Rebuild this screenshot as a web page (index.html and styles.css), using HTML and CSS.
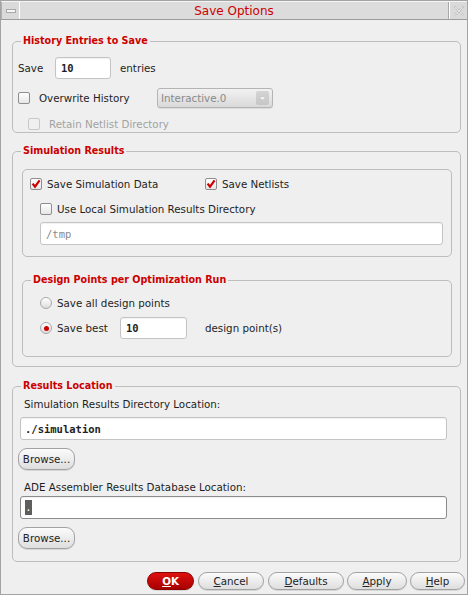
FILE: index.html
```html
<!DOCTYPE html>
<html>
<head>
<meta charset="utf-8">
<title>Save Options</title>
<link rel="stylesheet" href="styles.css">
</head>
<body>
<div class="window">
  <div class="titlebar">
    <div class="tb-btn tb-min"><span class="min-bar"></span></div>
    <div class="tb-title">Save Options</div>
    <div class="tb-btn tb-close">
      <svg width="12" height="12" viewBox="0 0 12 12"><path d="M1.5 1.5 L10.5 10.5 M10.5 1.5 L1.5 10.5" stroke="#b4b4b4" stroke-width="2" stroke-dasharray="1.4 1" fill="none"/><path d="M1.5 1.5 L10.5 10.5 M10.5 1.5 L1.5 10.5" stroke="#ffffff" stroke-width="0.6" fill="none"/></svg>
    </div>
  </div>

  <div class="content">
    <fieldset class="group g-history">
      <legend>History Entries to Save</legend>
      <div class="gbody">
        <div class="row r-save">
          <span class="w-save">Save</span>
          <span class="field f-entries">10</span>
          <span class="after-entries">entries</span>
        </div>
        <div class="row r-over">
          <span class="cb"></span>
          <span class="w-over">Overwrite History</span>
          <span class="combo"><span class="combo-text">Interactive.0</span><span class="combo-arrow"><svg width="7" height="5" viewBox="0 0 7 5"><path d="M0.5 1 L6.5 1 L3.5 4 Z" fill="#ffffff" stroke="#c8c8c8" stroke-width="0.6"/></svg></span></span>
        </div>
        <div class="row r-retain">
          <span class="cb cb-disabled"></span>
          <span class="disabled-text">Retain Netlist Directory</span>
        </div>
      </div>
    </fieldset>

    <fieldset class="group g-sim">
      <legend>Simulation Results</legend>
      <div class="gbody gbody-sim">
        <div class="box box-sim">
          <div class="row r-simdata">
            <span class="cb cb-checked"><svg width="10" height="10" viewBox="0 0 10 10"><path d="M1.6 4.6 L4 7.6 L8.6 1.4" stroke="#cc0000" stroke-width="2.2" fill="none" stroke-linejoin="miter"/></svg></span>
            <span class="w-simdata">Save Simulation Data</span>
            <span class="cb cb-checked"><svg width="10" height="10" viewBox="0 0 10 10"><path d="M1.6 4.6 L4 7.6 L8.6 1.4" stroke="#cc0000" stroke-width="2.2" fill="none" stroke-linejoin="miter"/></svg></span>
            <span class="w-netlists">Save Netlists</span>
          </div>
          <div class="row r-local">
            <span class="cb"></span>
            <span class="w-local">Use Local Simulation Results Directory</span>
          </div>
          <div class="field f-tmp">/tmp</div>
        </div>

        <fieldset class="group g-design">
          <legend>Design Points per Optimization Run</legend>
          <div class="gbody gbody-design">
            <div class="row r-all">
              <span class="radio"></span>
              <span class="w-radio">Save all design points</span>
            </div>
            <div class="row r-best">
              <span class="radio radio-on"></span>
              <span class="w-radio w-best">Save best</span>
              <span class="field f-best">10</span>
              <span class="after-best">design point(s)</span>
            </div>
          </div>
        </fieldset>
      </div>
    </fieldset>

    <fieldset class="group g-loc">
      <legend>Results Location</legend>
      <div class="gbody gbody-loc">
        <div class="loc-label">Simulation Results Directory Location:</div>
        <div class="field f-loc f-sim">./simulation</div>
        <div class="btn btn-browse">Browse...</div>
        <div class="loc-label loc-label2">ADE Assembler Results Database Location:</div>
        <div class="field f-loc f-ade"><span class="sel">.</span></div>
        <div class="btn btn-browse btn-browse2">Browse...</div>
      </div>
    </fieldset>

    <div class="buttons">
      <div class="btn btn-ok"><u>O</u>K</div>
      <div class="btn btn-cancel"><u>C</u>ancel</div>
      <div class="btn btn-defaults"><u>D</u>efaults</div>
      <div class="btn btn-apply"><u>A</u>pply</div>
      <div class="btn btn-help"><u>H</u>elp</div>
    </div>
  </div>
</div>
</body>
</html>
```

FILE: styles.css
```css
* { box-sizing: border-box; }

body {
  margin: 0;
  background: #efefef;
  font-family: "DejaVu Sans", sans-serif;
  font-size: 10.3px;
  color: #1e1e1e;
}

.window {
  width: 468px;
  height: 595px;
  border: 1px solid #a3a3a3;
  display: flex;
  flex-direction: column;
  background: #efefef;
}

/* Title bar */
.titlebar {
  height: 19px;
  display: flex;
  background: #dcdcdc;
  border-bottom: 1px solid #9c9c9c;
  border-top: 1px solid #f4f4f4;
}
.tb-btn {
  width: 19px;
  display: flex;
  align-items: center;
  justify-content: center;
  background: #dadada;
}
.tb-min {
  border-left: 1px solid #b0b0b0;
  border-right: 1px solid #ffffff;
}
.tb-close {
  border-left: 1px solid #ffffff;
  width: 18px;
}
.min-bar {
  width: 10px;
  height: 4px;
  border: 1px solid #a8a8a8;
  background: #f6f6f6;
}
.tb-title {
  flex: 1;
  text-align: center;
  color: #cc0000;
  font-size: 12px;
  line-height: 18px;
  border-right: 1px solid #a8a8a8;
}

/* Content */
.content {
  flex: 1;
  padding: 14px 6px 0 11px;
  display: flex;
  flex-direction: column;
}

.group {
  margin: 0;
  padding: 0;
  border: 1px solid #bdbdbd;
  border-radius: 5px;
  min-width: 0;
}
.group legend {
  margin-left: 8px;
  padding: 0 2px;
  color: #cc0000;
  font-weight: bold;
  font-size: 9.6px;
  line-height: 14px;
}

.row {
  display: flex;
  align-items: center;
}

/* History group */
.gbody { padding: 9px 6px 0 5px; }
.r-save { height: 22px; margin-bottom: 9px; }
.r-over { height: 20px; margin-bottom: 8px; }
.r-retain { height: 16px; padding-left: 10px; }

.w-save { width: 37px; }
.after-entries { margin-left: 9px; }
.w-over { width: 118px; margin-left: 9px; }
.disabled-text { color: #a2a2a2; margin-left: 9px; }

.field {
  background: #ffffff;
  border: 1px solid #c4c4c4;
  border-radius: 3px;
  box-shadow: inset 0 1px 1px rgba(0,0,0,0.06);
  font-family: "DejaVu Sans Mono", monospace;
  font-weight: bold;
  font-size: 10.5px;
  display: flex;
  align-items: center;
}
.f-entries { width: 56px; height: 22px; padding-left: 5px; }

.combo {
  width: 116px;
  height: 20px;
  border: 1px solid #b4b4b4;
  border-radius: 3px;
  background: linear-gradient(#f2f2f2, #d9d9d9);
  display: flex;
  align-items: center;
  box-shadow: 0 1px 0 rgba(0,0,0,0.08);
}
.combo-text {
  flex: 1;
  color: #8a8a8a;
  padding-left: 3px;
}
.combo-arrow {
  width: 13px;
  height: 14px;
  margin-right: 3px;
  background: linear-gradient(#d4d4d4, #c6c6c6);
  border-radius: 2px;
  display: flex;
  align-items: center;
  justify-content: center;
}

/* checkboxes & radios */
.cb {
  width: 12px;
  height: 12px;
  border: 1px solid #8e8e8e;
  border-radius: 2px;
  background: linear-gradient(#ffffff, #e6e6e6);
  flex: none;
  display: flex;
  align-items: center;
  justify-content: center;
}
.cb-disabled { border-color: #c8c8c8; background: #f0f0f0; }
.radio {
  width: 12px;
  height: 12px;
  border: 1px solid #a8a8a8;
  border-radius: 50%;
  background: linear-gradient(#ffffff, #dcdcdc);
  flex: none;
  display: flex;
  align-items: center;
  justify-content: center;
}
.radio-on::after {
  content: "";
  width: 5px;
  height: 5px;
  border-radius: 50%;
  background: #cc0000;
}

/* Simulation group */
.gbody-sim { padding: 11px 8px 9px 9px; }
.box {
  border: 1px solid #bdbdbd;
  border-radius: 5px;
}
.box-sim { padding: 6px 8px 11px 7px; }
.r-simdata { height: 16px; margin-bottom: 9px; }
.w-simdata { width: 158px; margin-left: 5px; }
.w-netlists { margin-left: 5px; }
.r-local { height: 16px; margin-bottom: 5px; padding-left: 10px; }
.w-local { margin-left: 5px; }
.f-tmp {
  margin-left: 10px;
  height: 23px;
  padding-left: 5px;
  font-weight: normal;
  color: #8a8a8a;
}

.g-design { margin-top: 16px; }
.gbody-design { padding: 8px 8px 17px 17px; }
.r-all { height: 16px; margin-bottom: 6px; }
.r-best { height: 22px; }
.w-radio { margin-left: 5px; }
.w-best { width: 63px; }
.f-best { width: 67px; height: 22px; padding-left: 5px; }
.after-best { margin-left: 18px; }

.g-sim { margin-top: 11px; }
.g-loc { margin-top: 12px; }

/* Results location */
.gbody-loc { padding: 4px 13px 12px 7px; display: flex; flex-direction: column; align-items: flex-start; }
.loc-label { height: 14px; line-height: 14px; margin-left: 4px; }
.loc-label2 { margin-top: 10px; }
.f-loc { align-self: stretch; padding-left: 4px; }
.f-sim { height: 23px; margin-top: 6px; }
.f-ade { height: 23px; margin-top: 2px; border-color: #8c8c8c; }
.sel {
  display: inline-block;
  width: 7px;
  height: 15px;
  background: #5e5e5e;
  color: #ffffff;
  line-height: 15px;
  font-weight: normal;
  text-align: center;
}

.btn {
  display: flex;
  align-items: center;
  justify-content: center;
  border: 1px solid #a2a2a2;
  border-radius: 9px;
  background: linear-gradient(#fbfbfb, #dedede);
  box-shadow: 0 1px 0 rgba(0,0,0,0.1);
  color: #222;
}
.btn-browse {
  width: 57px;
  height: 22px;
  margin-top: 8px;
  margin-left: -2px;
}
.btn-browse2 { margin-top: 8px; }

/* Bottom buttons */
.buttons {
  display: flex;
  justify-content: flex-end;
  margin-top: 10px;
  margin-right: -4px;
}
.buttons .btn { height: 18px; }
.buttons u { text-decoration: underline; text-underline-offset: 1px; }
.btn-ok {
  width: 47px;
  background: linear-gradient(#dd1010, #a80000);
  border-color: #8a0000;
  color: #ffffff;
  font-weight: bold;
}
.btn-cancel { width: 66px; margin-left: 4px; }
.btn-defaults { width: 76px; margin-left: 4px; }
.btn-apply { width: 60px; margin-left: 3px; }
.btn-help { width: 55px; margin-left: 3px; }
```
